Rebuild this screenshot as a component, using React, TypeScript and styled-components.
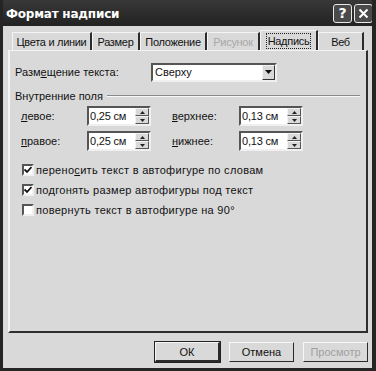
import styled, { createGlobalStyle, css } from 'styled-components'

const Global = createGlobalStyle`
  html, body {
    margin: 0;
    padding: 0;
    background: #d9d9d9;
  }
  body {
    font-family: "Liberation Sans", Arial, sans-serif;
    font-size: 11px;
    color: #111;
  }
`

const Window = styled.div`
  width: 376px;
  height: 371px;
  box-sizing: border-box;
  display: flex;
  flex-direction: column;
  background: #d9d9d9;
  border-left: 3px solid #252525;
  border-right: 4px solid #252525;
  border-bottom: 3px solid #252525;
  overflow: hidden;
`

const TitleBar = styled.div`
  height: 26px;
  flex: none;
  margin: 0 -4px 0 -3px;
  padding: 0 3px 0 6px;
  display: flex;
  align-items: center;
  background: linear-gradient(#383838, #222);
  color: #fff;
  font-family: "DejaVu Sans", Verdana, sans-serif;
  font-weight: bold;
  font-size: 12px;
  letter-spacing: -0.2px;
`

const Title = styled.div`
  flex: 1;
  padding-top: 1px;
`

const TitleButton = styled.div`
  width: 19px;
  height: 19px;
  margin-left: 2px;
  box-sizing: border-box;
  border: 1px solid #e8e8e8;
  border-radius: 3px;
  background: #4a4a4a;
  display: flex;
  align-items: center;
  justify-content: center;
  font-size: 14px;
  color: #fff;
`

const Body = styled.div`
  flex: 1;
  display: flex;
  flex-direction: column;
  padding: 4px 4px 0 5px;
`

const TabRow = styled.div`
  display: flex;
  height: 20px;
  padding-left: 4px;
  align-items: flex-end;
`

const Tab = styled.div<{ $w: number; $active?: boolean; $disabled?: boolean }>`
  width: ${p => p.$w}px;
  height: 18px;
  box-sizing: border-box;
  display: flex;
  align-items: center;
  justify-content: center;
  border-left: 1px solid #f4f4f4;
  border-right: 2px solid #2c2c2c;
  border-top: 1px solid #f4f4f4;
  white-space: nowrap;
  letter-spacing: -0.3px;
  color: ${p => (p.$disabled ? '#a8a8a8' : '#111')};
  ${p =>
    p.$active &&
    css`
      height: 20px;
      span {
        outline: 1px dotted #222;
        outline-offset: 1px;
      }
    `}
`

const Panel = styled.div`
  height: 283px;
  flex: none;
  box-sizing: border-box;
  border-left: 2px solid #f4f4f4;
  border-top: 1px solid #f4f4f4;
  border-right: 2px solid #2e2e2e;
  border-bottom: 2px solid #2e2e2e;
  padding: 11px 0 0 5px;
  display: flex;
  flex-direction: column;
`

const FieldRow = styled.div`
  display: flex;
  align-items: center;
  height: 20px;
`

const Label = styled.span<{ $w: number }>`
  width: ${p => p.$w}px;
  flex: none;
`

const Select = styled.div`
  width: 126px;
  height: 19px;
  box-sizing: border-box;
  background: #fff;
  border: 2px solid;
  border-color: #555 #f0f0f0 #f0f0f0 #555;
  display: flex;
  align-items: center;
  padding-left: 2px;
`

const SelectText = styled.span`
  flex: 1;
`

const DropButton = styled.div`
  width: 13px;
  height: 15px;
  box-sizing: border-box;
  border: 1px solid;
  border-color: #f4f4f4 #333 #333 #f4f4f4;
  background: #d9d9d9;
  display: flex;
  align-items: center;
  justify-content: center;
`

const GroupHead = styled.div`
  display: flex;
  align-items: center;
  margin-top: 7px;
  height: 14px;
  gap: 4px;
  padding-right: 6px;
`

const GroupLine = styled.div`
  flex: 1;
  height: 0;
  border-top: 1px solid #8a8a8a;
  border-bottom: 1px solid #fafafa;
`

const SpinGrid = styled.div`
  display: grid;
  grid-template-columns: 66px 64px 21px 67px 64px;
  row-gap: 5px;
  margin-top: 3px;
  padding-left: 6px;
  align-items: center;
`

const Spin = styled.div`
  height: 20px;
  box-sizing: border-box;
  background: #fff;
  border: 2px solid;
  border-color: #555 #f0f0f0 #f0f0f0 #555;
  display: flex;
  align-items: center;
  padding-left: 1px;
  font-size: 11px;
  letter-spacing: -0.2px;
`

const SpinText = styled.span`
  flex: 1;
`

const SpinButtons = styled.div`
  width: 14px;
  height: 16px;
  display: flex;
  flex-direction: column;
  background: #d9d9d9;
`

const SpinHalf = styled.div`
  flex: 1;
  display: flex;
  align-items: center;
  justify-content: center;
  border: 1px solid;
  border-color: #f4f4f4 #555 #555 #f4f4f4;
`

const Checks = styled.div`
  display: flex;
  flex-direction: column;
  gap: 8px;
  margin-top: 13px;
  padding-left: 7px;
`

const CheckRow = styled.div`
  display: flex;
  align-items: center;
  gap: 2px;
  height: 12px;
  letter-spacing: 0.3px;
`

const Box = styled.div`
  width: 12px;
  height: 12px;
  box-sizing: border-box;
  background: #fff;
  border: 2px solid;
  border-color: #555 #f0f0f0 #f0f0f0 #555;
  display: flex;
  align-items: center;
  justify-content: center;
`

const Footer = styled.div`
  display: flex;
  justify-content: flex-end;
  gap: 9px;
  padding: 9px 0 0 0;
`

const Button = styled.div<{ $default?: boolean; $disabled?: boolean }>`
  width: 65px;
  height: 20px;
  box-sizing: border-box;
  display: flex;
  align-items: center;
  justify-content: center;
  border: 1px solid;
  border-color: #f6f6f6 #2a2a2a #2a2a2a #f6f6f6;
  color: ${p => (p.$disabled ? '#a0a0a0' : '#111')};
  ${p =>
    p.$default &&
    css`
      outline: 1px solid #222;
      border-width: 1px 2px 2px 1px;
    `}
`

const Underline = styled.u`
  text-decoration-thickness: 1px;
  text-underline-offset: 1px;
`

function Arrow({ up }: { up?: boolean }) {
  return (
    <svg width="5" height="3" viewBox="0 0 5 3">
      <path d={up ? 'M2.5 0 L5 3 L0 3 Z' : 'M0 0 L5 0 L2.5 3 Z'} fill="#222" />
    </svg>
  )
}

function SpinBox({ value }: { value: string }) {
  return (
    <Spin>
      <SpinText>{value}</SpinText>
      <SpinButtons>
        <SpinHalf>
          <Arrow up />
        </SpinHalf>
        <SpinHalf>
          <Arrow />
        </SpinHalf>
      </SpinButtons>
    </Spin>
  )
}

function Check({ checked, children }: { checked?: boolean; children: React.ReactNode }) {
  return (
    <CheckRow>
      <Box>
        {checked && (
          <svg width="8" height="8" viewBox="0 0 8 8">
            <path d="M0.5 3.5 L3 6 L7.5 1" stroke="#111" strokeWidth="1.8" fill="none" />
          </svg>
        )}
      </Box>
      <span>{children}</span>
    </CheckRow>
  )
}

const tabs = [
  { label: 'Цвета и линии', w: 80 },
  { label: 'Размер', w: 48 },
  { label: 'Положение', w: 67 },
  { label: 'Рисунок', w: 53, disabled: true },
  { label: 'Надпись', w: 58, active: true },
  { label: 'Веб', w: 46 },
]

export default function App() {
  return (
    <>
      <Global />
      <Window>
        <TitleBar>
          <Title>Формат надписи</Title>
          <TitleButton>?</TitleButton>
          <TitleButton>
            <svg width="11" height="11" viewBox="0 0 11 11">
              <path d="M1.5 1.5 L9.5 9.5 M9.5 1.5 L1.5 9.5" stroke="#fff" strokeWidth="2" />
            </svg>
          </TitleButton>
        </TitleBar>
        <Body>
          <TabRow>
            {tabs.map(t => (
              <Tab key={t.label} $w={t.w} $active={t.active} $disabled={t.disabled}>
                <span>{t.label}</span>
              </Tab>
            ))}
          </TabRow>
          <Panel>
            <FieldRow>
              <Label $w={136}>
                Разм<Underline>е</Underline>щение текста:
              </Label>
              <Select>
                <SelectText>Сверху</SelectText>
                <DropButton>
                  <svg width="7" height="4" viewBox="0 0 7 4">
                    <path d="M0 0 L7 0 L3.5 4 Z" fill="#111" />
                  </svg>
                </DropButton>
              </Select>
            </FieldRow>
            <GroupHead>
              <span>Внутренние поля</span>
              <GroupLine />
            </GroupHead>
            <SpinGrid>
              <span>
                <Underline>л</Underline>евое:
              </span>
              <SpinBox value="0,25 см" />
              <span />
              <span>
                <Underline>в</Underline>ерхнее:
              </span>
              <SpinBox value="0,13 см" />
              <span>
                <Underline>п</Underline>равое:
              </span>
              <SpinBox value="0,25 см" />
              <span />
              <span>
                <Underline>н</Underline>ижнее:
              </span>
              <SpinBox value="0,13 см" />
            </SpinGrid>
            <Checks>
              <Check checked>
                перено<Underline>с</Underline>ить текст в автофигуре по словам
              </Check>
              <Check checked>
                по<Underline>д</Underline>гонять размер автофигуры под текст
              </Check>
              <Check>повернуть текст в автофигуре на 90°</Check>
            </Checks>
          </Panel>
          <Footer>
            <Button $default>ОК</Button>
            <Button>Отмена</Button>
            <Button $disabled>Просмотр</Button>
          </Footer>
        </Body>
      </Window>
    </>
  )
}
